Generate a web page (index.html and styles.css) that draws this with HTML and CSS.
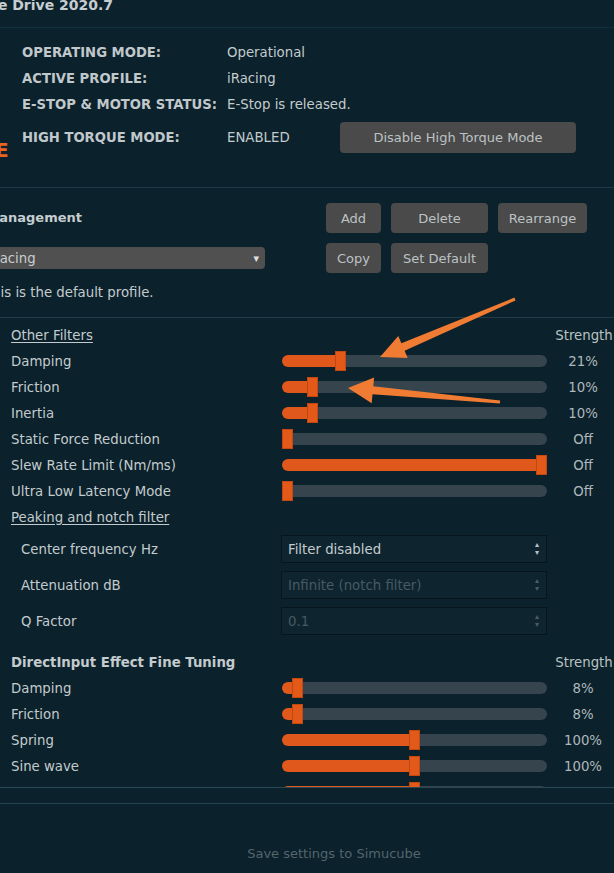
FILE: index.html
```html
<!DOCTYPE html>
<html>
<head>
<meta charset="utf-8">
<link rel="stylesheet" href="styles.css">
</head>
<body>
<div class="page">
  <div class="title">True Drive 2020.7</div>
  <div class="hline faint"></div>

  <div class="status">
    <div class="side"><span class="big-e">E</span></div>
    <div class="status-main">
      <div class="sgrid">
        <div class="k">OPERATING MODE:</div><div class="v">Operational</div>
        <div class="k">ACTIVE PROFILE:</div><div class="v">iRacing</div>
        <div class="k">E-STOP &amp; MOTOR STATUS:</div><div class="v">E-Stop is released.</div>
      </div>
      <div class="sgrid4">
        <div class="k">HIGH TORQUE MODE:</div><div class="v">ENABLED</div>
        <button class="btn torque">Disable High Torque Mode</button>
      </div>
    </div>
  </div>

  <section class="mgmt">
    <div class="mgmt-left">
      <div class="mgmt-title">Profile Management</div>
      <div class="dropdown"><span>iRacing</span><span class="caret">▾</span></div>
      <div class="note">This is the default profile.</div>
    </div>
    <div class="mgmt-btns">
      <button class="btn">Add</button>
      <button class="btn">Delete</button>
      <button class="btn">Rearrange</button>
      <button class="btn">Copy</button>
      <button class="btn">Set Default</button>
    </div>
  </section>

  <section class="filters">
    <div class="row">
      <span class="lbl u">Other Filters</span><span></span><span class="val strength">Strength</span>
    </div>
    <div class="row">
      <span class="lbl">Damping</span>
      <div class="slider"><i class="fill" style="width:53px"></i><i class="knob"></i><i class="rest"></i></div>
      <span class="val">21%</span>
    </div>
    <div class="row">
      <span class="lbl">Friction</span>
      <div class="slider"><i class="fill" style="width:25px"></i><i class="knob"></i><i class="rest"></i></div>
      <span class="val">10%</span>
    </div>
    <div class="row">
      <span class="lbl">Inertia</span>
      <div class="slider"><i class="fill" style="width:25px"></i><i class="knob"></i><i class="rest"></i></div>
      <span class="val">10%</span>
    </div>
    <div class="row">
      <span class="lbl">Static Force Reduction</span>
      <div class="slider"><i class="fill" style="width:0px"></i><i class="knob"></i><i class="rest"></i></div>
      <span class="val">Off</span>
    </div>
    <div class="row">
      <span class="lbl">Slew Rate Limit (Nm/ms)</span>
      <div class="slider"><i class="fill" style="width:254px"></i><i class="knob"></i><i class="rest"></i></div>
      <span class="val">Off</span>
    </div>
    <div class="row">
      <span class="lbl">Ultra Low Latency Mode</span>
      <div class="slider"><i class="fill" style="width:0px"></i><i class="knob"></i><i class="rest"></i></div>
      <span class="val">Off</span>
    </div>
    <div class="row">
      <span class="lbl u">Peaking and notch filter</span><span></span><span></span>
    </div>

    <div class="spinrow first">
      <span class="sublbl">Center frequency Hz</span>
      <div class="spin"><span>Filter disabled</span><span class="arrs"><b>▴</b><b>▾</b></span></div>
    </div>
    <div class="spinrow">
      <span class="sublbl">Attenuation dB</span>
      <div class="spin off"><span>Infinite (notch filter)</span><span class="arrs"><b>▴</b><b>▾</b></span></div>
    </div>
    <div class="spinrow">
      <span class="sublbl">Q Factor</span>
      <div class="spin off"><span>0.1</span><span class="arrs"><b>▴</b><b>▾</b></span></div>
    </div>

    <div class="row dihead">
      <span class="lbl bold">DirectInput Effect Fine Tuning</span><span></span><span class="val strength">Strength</span>
    </div>
    <div class="row">
      <span class="lbl">Damping</span>
      <div class="slider"><i class="fill" style="width:10px"></i><i class="knob"></i><i class="rest"></i></div>
      <span class="val">8%</span>
    </div>
    <div class="row">
      <span class="lbl">Friction</span>
      <div class="slider"><i class="fill" style="width:10px"></i><i class="knob"></i><i class="rest"></i></div>
      <span class="val">8%</span>
    </div>
    <div class="row">
      <span class="lbl">Spring</span>
      <div class="slider"><i class="fill" style="width:127px"></i><i class="knob"></i><i class="rest"></i></div>
      <span class="val">100%</span>
    </div>
    <div class="row">
      <span class="lbl">Sine wave</span>
      <div class="slider"><i class="fill" style="width:127px"></i><i class="knob"></i><i class="rest"></i></div>
      <span class="val">100%</span>
    </div>
    <div class="row">
      <span class="lbl"></span>
      <div class="slider"><i class="fill" style="width:127px"></i><i class="knob"></i><i class="rest"></i></div>
      <span class="val"></span>
    </div>
  </section>

  <div class="hline low"></div>
  <div class="footer">Save settings to Simucube</div>

  <svg class="arrows" width="614" height="873" viewBox="0 0 614 873">
    <polygon fill="#f07b33" points="380,357 407.7,358 404.6,350.7 515.6,300.4 514.4,297.6 401.4,343.3 398.3,336"/>
    <polygon fill="#f07b33" points="348,388 374.1,377.4 373.3,386.3 500.1,400.5 499.9,403.5 372.5,394.3 371.7,403.2"/>
  </svg>
</div>
</body>
</html>
```

FILE: styles.css
```css
* { box-sizing: border-box; }
html, body {
  margin: 0;
  padding: 0;
  background: #0b212b;
}
body {
  width: 614px;
  height: 873px;
  overflow: hidden;
  font-family: "DejaVu Sans", Verdana, sans-serif;
  font-size: 13.3px;
  color: #c3cbce;
}
.page {
  position: relative;
  width: 614px;
  height: 873px;
  overflow: hidden;
}
.title {
  margin-top: -4px;
  height: 18px;
  line-height: 18px;
  font-size: 14px;
  font-weight: bold;
  white-space: nowrap;
  text-indent: -27px;
  color: #c6cdd0;
}
.hline { height: 1px; background: #1d3946; }
.hline.faint { margin-top: 13px; background: #11303c; }
.hline.low { margin-top: 15px; background: #24434f; }

/* status */
.status {
  display: flex;
  margin-top: 11px;
  height: 122px;
}
.side { width: 22px; flex: none; }
.big-e {
  display: block;
  margin-top: 101px;
  margin-left: -5px;
  line-height: 20px;
  font-size: 20px;
  font-weight: bold;
  color: #e8641f;
}
.sgrid {
  display: grid;
  grid-template-columns: 205px auto;
  grid-auto-rows: 26px;
  align-items: center;
}
.sgrid4 {
  display: grid;
  grid-template-columns: 205px 113px 236px;
  height: 31px;
  margin-top: 5px;
  align-items: center;
}
.k { font-weight: bold; font-size: 13.2px; color: #c0c8cb; white-space: nowrap; }
.v { color: #c3cbce; white-space: nowrap; }

.btn {
  font-family: "DejaVu Sans", Verdana, sans-serif;
  font-size: 13px;
  color: #bcc2c4;
  background: #4a4a4a;
  border: none;
  border-radius: 4px;
  height: 30px;
  padding: 0;
}
.btn.torque { height: 31px; width: 236px; }

/* management */
.mgmt {
  display: flex;
  margin-top: 26px;
  border-top: 1px solid #1d3a46;
  border-bottom: 1px solid #1f3c48;
  padding: 15px 0 15px 0;
  gap: 61px;
}
.mgmt-left { width: 265px; flex: none; }
.mgmt-title {
  height: 30px;
  line-height: 30px;
  font-size: 13px;
  font-weight: bold;
  white-space: nowrap;
  text-indent: -66px;
  color: #c6cdd0;
}
.dropdown {
  margin-top: 14px;
  margin-left: -30px;
  height: 22px;
  width: 295px;
  background: #505050;
  border-radius: 4px;
  display: flex;
  align-items: center;
  justify-content: space-between;
  padding: 0 6px 0 17px;
  color: #c8cdcf;
}
.caret { font-size: 11px; color: #e0e0e0; }
.note {
  margin-top: 15px;
  height: 18px;
  line-height: 18px;
  white-space: nowrap;
  text-indent: -16px;
  color: #c3cbce;
}
.mgmt-btns {
  display: grid;
  grid-template-columns: 55px 97px 89px;
  grid-auto-rows: 30px;
  column-gap: 10px;
  row-gap: 10px;
  align-content: start;
}

/* filters */
.filters {
  height: 470px;
  overflow: hidden;
  padding-top: 4px;
  border-bottom: 1px solid #2a4955;
}
.row {
  display: grid;
  grid-template-columns: 282px 265px 67px;
  height: 26px;
  align-items: center;
}
.lbl { padding-left: 11px; white-space: nowrap; color: #c3cbce; }
.lbl.u { text-decoration: underline; text-underline-offset: 2px; }
.lbl.bold { font-weight: bold; }
.val { text-align: center; padding-left: 5px; color: #aeb8bc; }
.strength { color: #b9c1c4; white-space: nowrap; padding-left: 7px; }
.slider {
  display: flex;
  align-items: center;
  height: 20px;
}
.slider i { display: block; flex: none; }
.fill {
  height: 12px;
  background: #e0581b;
  border-radius: 6px 0 0 6px;
}
.knob {
  width: 11px;
  height: 20px;
  background: #e3591a;
  box-shadow: inset 0 0 0 1px #c2480f;
}
.slider .rest {
  flex: 1 1 auto;
  height: 12px;
  background: #36444d;
  border-radius: 0 6px 6px 0;
}

.spinrow {
  display: grid;
  grid-template-columns: 281px 266px;
  height: 28px;
  margin-top: 8px;
  align-items: center;
}
.spinrow.first { margin-top: 5px; }
.sublbl { padding-left: 21px; color: #c3cbce; }
.spin {
  height: 28px;
  background: #0e2530;
  border: 1px solid #06151c;
  display: flex;
  align-items: center;
  justify-content: space-between;
  padding: 0 7px 0 6px;
  color: #c3cbce;
}
.spin.off { color: #475a61; }
.arrs {
  display: flex;
  flex-direction: column;
  line-height: 8px;
  font-size: 8px;
  color: #b8c0c3;
}
.arrs b { font-weight: normal; }
.spin.off .arrs { color: #4a5c63; }
.dihead { margin-top: 14px; }

.footer {
  margin-top: 41px;
  height: 18px;
  line-height: 18px;
  padding-left: 54px;
  text-align: center;
  font-size: 13px;
  color: #54656c;
}

.arrows {
  position: absolute;
  left: 0;
  top: 0;
  pointer-events: none;
}
```
